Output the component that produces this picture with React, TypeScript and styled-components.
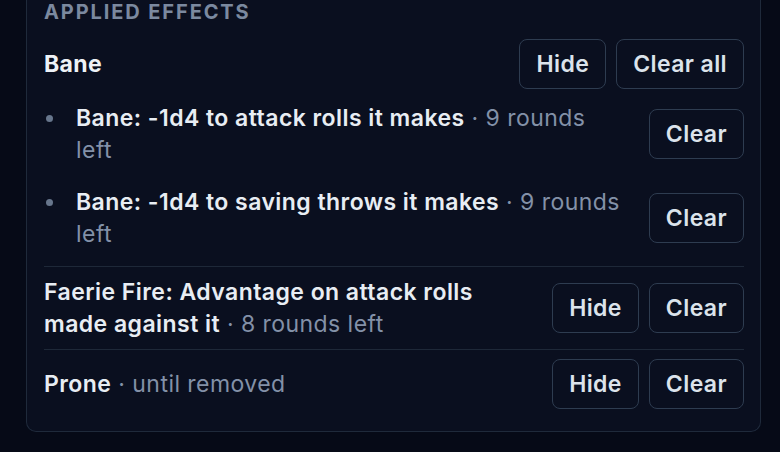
import React from 'react'
import styled, { createGlobalStyle } from 'styled-components'

const GlobalStyle = createGlobalStyle`
	html, body {
		margin: 0;
		padding: 0;
		background: #060a17;
	}
	body {
		font-family: Inter, "Noto Sans", sans-serif;
		-webkit-font-smoothing: antialiased;
	}
`

type SubEffect = { text: string; meta: string }
type Effect = {
	name: string
	meta?: string
	children?: SubEffect[]
}

const effects: Effect[] = [
	{
		name: 'Bane',
		children: [
			{ text: 'Bane: -1d4 to attack rolls it makes', meta: '9 rounds left' },
			{ text: 'Bane: -1d4 to saving throws it makes', meta: '9 rounds left' },
		],
	},
	{ name: 'Faerie Fire: Advantage on attack rolls made against it', meta: '8 rounds left' },
	{ name: 'Prone', meta: 'until removed' },
]

const App: React.FC = () => {
	return (
		<>
			<GlobalStyle />
			<StyledPanel>
				<StyledHeading>Applied Effects</StyledHeading>
				{effects.map((effect) =>
					effect.children ? (
						<StyledGroup key={effect.name}>
							<StyledRow>
								<StyledGroupName>{effect.name}</StyledGroupName>
								<StyledActions>
									<Button>Hide</Button>
									<Button>Clear all</Button>
								</StyledActions>
							</StyledRow>
							<StyledList>
								{effect.children.map((child) => (
									<StyledItem key={child.text}>
										<StyledBulletText>
											<StyledBullet />
											<StyledLabel>
												{child.text}
												<StyledMeta> · {child.meta}</StyledMeta>
											</StyledLabel>
										</StyledBulletText>
										<Button>Clear</Button>
									</StyledItem>
								))}
							</StyledList>
						</StyledGroup>
					) : (
						<StyledEffectRow key={effect.name}>
							<StyledLabel>
								{effect.name}
								<StyledMeta> · {effect.meta}</StyledMeta>
							</StyledLabel>
							<StyledActions>
								<Button>Hide</Button>
								<Button>Clear</Button>
							</StyledActions>
						</StyledEffectRow>
					)
				)}
			</StyledPanel>
		</>
	)
}

const StyledPanel = styled.div`
	box-sizing: border-box;
	width: 735px;
	margin-left: 26px;
	padding: 0 16px 13px 17px;
	background: #0a0f1f;
	border: 1px solid #1f2a3b;
	border-top: none;
	border-radius: 0 0 10px 10px;
	color: #e6ebf2;
`

const StyledHeading = styled.div`
	font-size: 20px;
	line-height: 25px;
	font-weight: 700;
	letter-spacing: 1.9px;
	text-transform: uppercase;
	color: #7b899f;
`

const StyledGroup = styled.div`
	margin-top: 14px;
	padding-bottom: 16px;
`

const StyledRow = styled.div`
	display: flex;
	align-items: center;
	justify-content: space-between;
	min-height: 50px;
`

const StyledGroupName = styled.div`
	font-size: 23px;
	font-weight: 700;
	letter-spacing: 0.4px;
	color: #eef2f7;
`

const StyledActions = styled.div`
	display: flex;
	gap: 10px;
	flex-shrink: 0;
`

const StyledList = styled.div`
	display: flex;
	flex-direction: column;
	gap: 20px;
	margin-top: 13px;
`

const StyledItem = styled.div`
	display: flex;
	align-items: center;
	gap: 24px;
`

const StyledBulletText = styled.div`
	flex: 1;
	display: flex;
	align-items: flex-start;
`

const StyledBullet = styled.span`
	flex-shrink: 0;
	width: 7px;
	height: 7px;
	margin: 13px 23px 0 2px;
	border-radius: 50%;
	background: #67768c;
`

const StyledLabel = styled.div`
	flex: 1;
	font-size: 23px;
	line-height: 32px;
	font-weight: 600;
	letter-spacing: 0.45px;
	color: #e8edf3;
`

const StyledMeta = styled.span`
	font-weight: 400;
	color: #8391a8;
`

const StyledEffectRow = styled.div`
	display: flex;
	align-items: center;
	gap: 24px;
	padding: 9px 0;
	border-top: 1px solid #1e2838;
`

const Button = styled.button`
	box-sizing: border-box;
	height: 50px;
	padding: 0 16px;
	background: #0a0f1f;
	border: 1.5px solid #2e3c50;
	border-radius: 8px;
	font-family: Inter, "Noto Sans", sans-serif;
	font-size: 23px;
	font-weight: 600;
	letter-spacing: 0.4px;
	color: #dce3eb;
	cursor: pointer;
`

export default App
